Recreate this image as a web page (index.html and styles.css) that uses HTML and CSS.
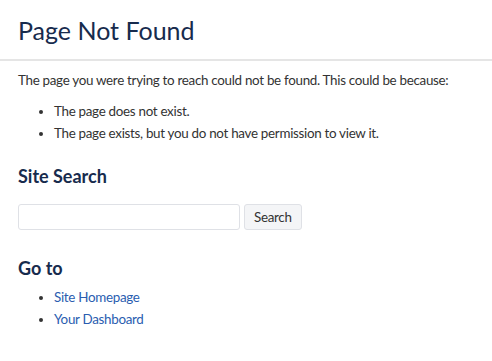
FILE: index.html
```html
<!DOCTYPE html>
<html lang="en">
<head>
  <meta charset="UTF-8" />
  <title>Page Not Found</title>
  <link rel="stylesheet" href="styles.css">
</head>
<body>
<header class="page-header">
  <h1>Page Not Found</h1>
</header>
<main>
  <p>The page you were trying to reach could not be found. This could be because:</p>
  <ul>
    <li>The page does not exist.</li>
    <li>The page exists, but you do not have permission to view it.</li>
  </ul>
  <h2>Site Search</h2>
  <form class="search-form" onsubmit="return false;">
    <input type="text" class="search-input">
    <button type="submit" class="search-btn">Search</button>
  </form>
  <h2 class="goto-title">Go to</h2>
  <ul class="links">
    <li><a href="#">Site Homepage</a></li>
    <li><a href="#">Your Dashboard</a></li>
  </ul>
</main>
</body>
</html>
```

FILE: styles.css
```css
* {
  box-sizing: border-box;
}
body {
  margin: 0;
  font-family: 'Segoe UI', Lato, sans-serif;
  font-size: 13.4px;
  letter-spacing: -0.3px;
  color: #333;
  background: #fff;
}
.page-header {
  padding: 13px 18px 12px;
  border-bottom: 2px solid #e5e5e5;
}
.page-header h1 {
  margin: 0;
  font-size: 25px;
  font-weight: 400;
  letter-spacing: 0;
  color: #172b4d;
  line-height: 34px;
}
main {
  padding: 8px 18px;
}
p {
  margin: 0 0 9px;
  line-height: 22px;
}
ul {
  margin: 0;
  padding-left: 36px;
}
li {
  line-height: 22px;
}
h2 {
  margin: 20px 0 16px;
  font-size: 18px;
  font-weight: 700;
  letter-spacing: 0;
  color: #172b4d;
  line-height: 24px;
}
.goto-title {
  margin: 26px 0 6px;
}
.search-form {
  display: flex;
  gap: 4px;
}
.search-input {
  width: 222px;
  height: 26px;
  border: 1px solid #dfe1e6;
  border-radius: 3px;
}
.search-btn {
  height: 26px;
  padding: 0 9px;
  font-family: inherit;
  font-size: 13.4px;
  letter-spacing: -0.3px;
  color: #333;
  background: #f4f5f7;
  border: 1px solid #dfe1e6;
  border-radius: 3px;
}
.links a {
  color: #2a5db0;
  text-decoration: none;
}
```
